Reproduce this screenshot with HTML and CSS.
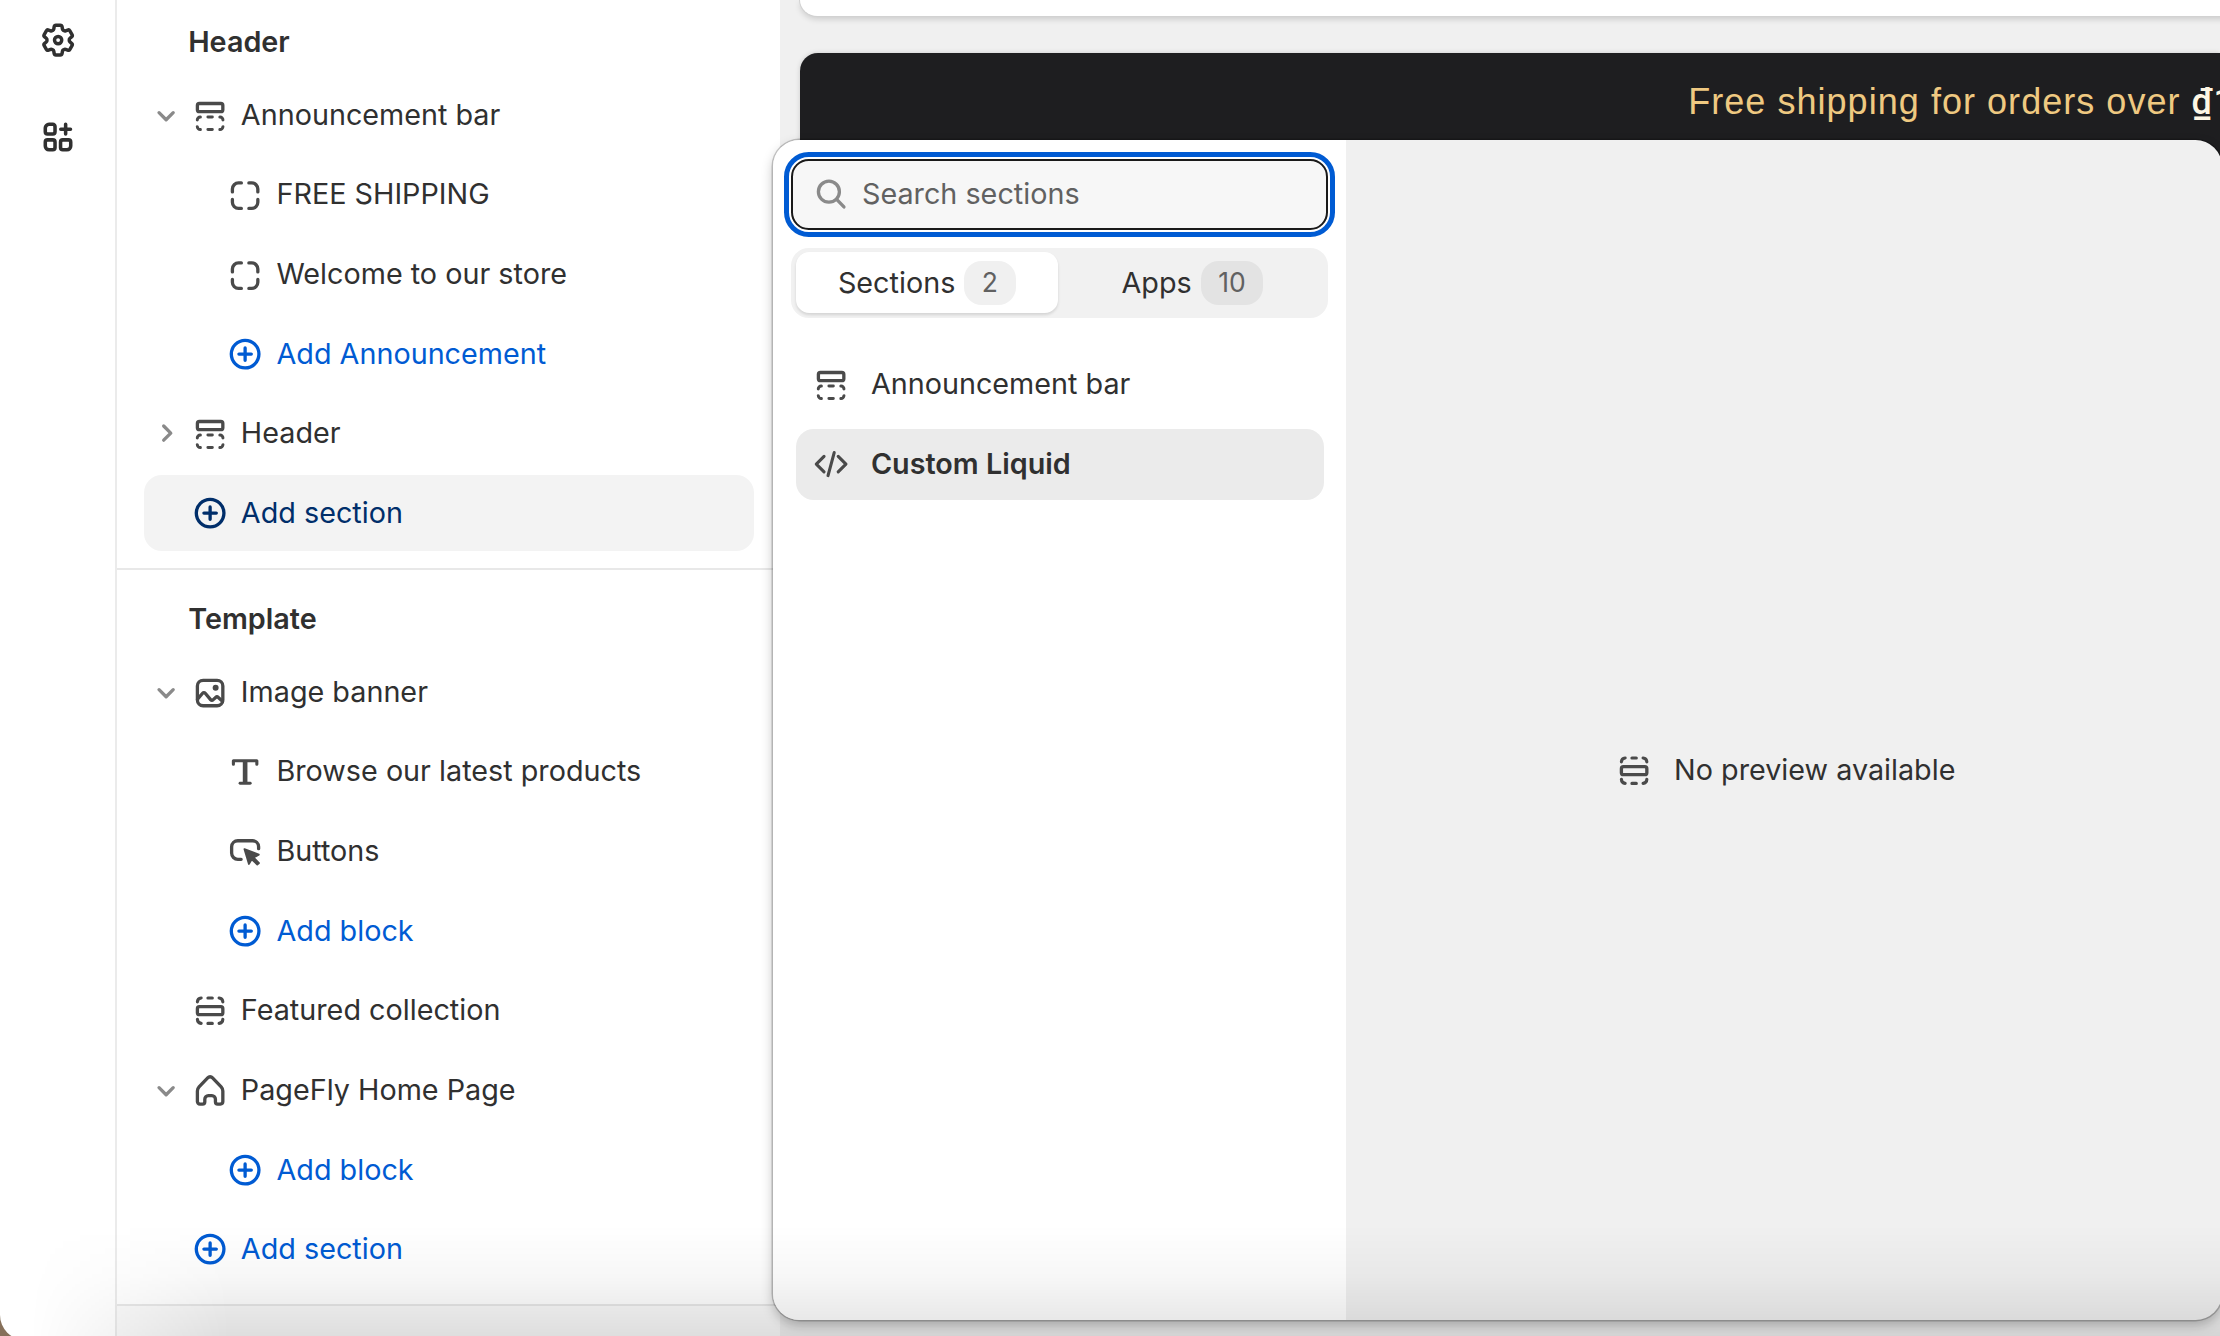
FILE: index.html
```html
<!DOCTYPE html>
<html lang="en">
<head>
<meta charset="utf-8">
<title>Theme editor</title>
<link rel="stylesheet" href="styles.css">
</head>
<body>
<svg class="sprite" aria-hidden="true">
  <symbol id="gear" viewBox="0 0 20 20"><g transform="translate(10 10) scale(.745) translate(-12 -12)" stroke-width="2.1"><path d="M9.594 3.94c.09-.542.56-.94 1.11-.94h2.593c.55 0 1.02.398 1.11.94l.213 1.281c.063.374.313.686.645.87.074.04.147.083.22.127.325.196.72.257 1.075.124l1.217-.456a1.125 1.125 0 0 1 1.37.49l1.296 2.247a1.125 1.125 0 0 1-.26 1.431l-1.003.827c-.293.241-.438.613-.43.992a7.723 7.723 0 0 1 0 .255c-.008.378.137.75.43.991l1.004.827c.424.35.534.955.26 1.43l-1.298 2.247a1.125 1.125 0 0 1-1.369.491l-1.217-.456c-.355-.133-.75-.072-1.076.124a6.47 6.47 0 0 1-.22.128c-.331.183-.581.495-.644.869l-.213 1.281c-.09.543-.56.94-1.11.94h-2.594c-.55 0-1.019-.398-1.11-.94l-.213-1.281c-.062-.374-.312-.686-.644-.87a6.52 6.52 0 0 1-.22-.127c-.325-.196-.72-.257-1.076-.124l-1.217.456a1.125 1.125 0 0 1-1.369-.49l-1.297-2.247a1.125 1.125 0 0 1 .26-1.431l1.004-.827c.292-.24.437-.613.43-.991a6.932 6.932 0 0 1 0-.255c.007-.38-.138-.751-.43-.992l-1.004-.827a1.125 1.125 0 0 1-.26-1.43l1.297-2.247a1.125 1.125 0 0 1 1.37-.491l1.216.456c.356.133.751.072 1.076-.124.072-.044.146-.086.22-.128.332-.183.582-.495.644-.869l.214-1.28Z"/><circle cx="12" cy="12" r="2.2"/></g></symbol>
  <symbol id="apps" viewBox="0 0 20 20"><g stroke-width="1.6"><path d="M5.9 4.2H7.6a1 1 0 0 1 1 1V7.6a1 1 0 0 1-1 1H5.2a1 1 0 0 1-1-1V5.9A1.7 1.7 0 0 1 5.9 4.2Z"/><path d="M5.2 11.25H7.6a1 1 0 0 1 1 1v2.5a1 1 0 0 1-1 1H5.9a1.7 1.7 0 0 1-1.7-1.7v-1.8a1 1 0 0 1 1-1Z"/><path d="M12.1 11.25h2.6a1 1 0 0 1 1 1v1.8a1.7 1.7 0 0 1-1.7 1.7h-1.9a1 1 0 0 1-1-1v-2.5a1 1 0 0 1 1-1Z"/><path d="M13.4 4.2v4.4M11.2 6.4h4.4"/></g></symbol>
  <symbol id="section-top" viewBox="0 0 20 20"><rect x="4.25" y="4.75" width="11.5" height="3.7" rx=".9"/><g stroke-width="1.35"><path d="M4.2 12.2a1.3 1.3 0 0 1 1.4-1.3M14.4 10.9a1.3 1.3 0 0 1 1.4 1.3M15.8 15.2a1.3 1.3 0 0 1-1.4 1.3M5.6 16.5a1.3 1.3 0 0 1-1.4-1.3M9 10.9h2M9 16.5h2"/></g></symbol>
  <symbol id="section" viewBox="0 0 20 20"><rect x="4.25" y="8.45" width="11.5" height="3.6" rx=".9"/><path d="M4.25 6.3a1.9 1.9 0 0 1 1.7-1.8M14.05 4.5a1.9 1.9 0 0 1 1.7 1.8M15.75 14.2a1.9 1.9 0 0 1-1.7 1.8M5.95 16a1.9 1.9 0 0 1-1.7-1.8M9 4.5h2M9 16h2" stroke-width="1.4"/></symbol>
  <symbol id="block" viewBox="0 0 20 20"><path d="M4.25 9V7.7a2.75 2.75 0 0 1 2.75-2.75H8.3M11.7 4.95H13a2.75 2.75 0 0 1 2.75 2.75V9M15.75 12.4v1.3A2.75 2.75 0 0 1 13 16.45H11.7M8.3 16.45H7a2.75 2.75 0 0 1-2.75-2.75V12.4" stroke-width="1.5"/></symbol>
  <symbol id="plus" viewBox="0 0 20 20"><circle cx="10" cy="10" r="6.25"/><path d="M10 7.2v5.6M7.2 10h5.6"/></symbol>
  <symbol id="image" viewBox="0 0 20 20"><rect x="4.25" y="4.65" width="11.5" height="11.5" rx="2.6"/><circle cx="12.5" cy="8" r="1.35" fill="currentColor" stroke="none"/><path d="M4.3 13.2l2.3-2.7a.8.8 0 0 1 1.2 0l2.5 3a.7.7 0 0 0 1 0l1.2-1.1a.9.9 0 0 1 1.2 0l1.9 1.7"/></symbol>
  <symbol id="text" viewBox="0 0 20 20"><path d="M4.7 6.9V5.3H15.3V6.9" stroke-width="1.4"/><path d="M10 5.3V15.3" stroke-width="2.1" stroke-linecap="butt"/><path d="M7.7 15.5h4.6" stroke-width="1.3"/></symbol>
  <symbol id="button" viewBox="0 0 20 20"><path d="M16.1 8.9V8a2.8 2.8 0 0 0-2.8-2.7H6.7A2.8 2.8 0 0 0 3.9 8v2.9a2.8 2.8 0 0 0 2.8 2.8H8.2"/><path d="M9.7 9.1l6.5 2.5-2.3 1.3 2.4 2.5-.8.7-2.5-2.4-1.3 2.1Z" fill="currentColor" stroke-width=".8"/></symbol>
  <symbol id="home" viewBox="0 0 20 20"><path d="M8.9 4.45 5 8.5a2.7 2.7 0 0 0-.75 1.9v4.8a1.1 1.1 0 0 0 1.1 1.1H6.6a1 1 0 0 0 1-1v-1.2a1.6 1.6 0 0 1 1.6-1.6h1.6a1.6 1.6 0 0 1 1.6 1.6v1.2a1 1 0 0 0 1 1h1.25a1.1 1.1 0 0 0 1.1-1.1v-4.8A2.7 2.7 0 0 0 15 8.5L11.1 4.45a1.5 1.5 0 0 0-2.2 0Z"/></symbol>
  <symbol id="search" viewBox="0 0 20 20"><circle cx="9" cy="8.9" r="4.75"/><path d="M12.5 12.4l3.3 3.4"/></symbol>
  <symbol id="code" viewBox="0 0 20 20"><path d="M6.8 6.5 3.3 10l3.5 3.5M13.2 6.5l3.5 3.5-3.5 3.5M11.4 4.8 8.6 15.2" stroke-width="1.4"/></symbol>
  <symbol id="chevron" viewBox="0 0 20 20"><path d="M6.8 8.9 10 12.1l3.2-3.2"/></symbol>
</svg>

<div class="window">
  <nav class="rail">
    <svg class="icon"><use href="#gear"/></svg>
    <svg class="icon"><use href="#apps"/></svg>
  </nav>

  <aside class="sidebar">
    <section class="group">
      <h2 class="group-title">Header</h2>
      <ul class="tree">
        <li class="row"><svg class="icon chevron"><use href="#chevron"/></svg><svg class="icon"><use href="#section-top"/></svg><span>Announcement bar</span></li>
        <li class="row nested"><svg class="icon"><use href="#block"/></svg><span>FREE SHIPPING</span></li>
        <li class="row nested"><svg class="icon"><use href="#block"/></svg><span>Welcome to our store</span></li>
        <li class="row nested add"><svg class="icon"><use href="#plus"/></svg><span>Add Announcement</span></li>
        <li class="row"><svg class="icon chevron closed"><use href="#chevron"/></svg><svg class="icon"><use href="#section-top"/></svg><span>Header</span></li>
        <li class="row add active"><svg class="icon"><use href="#plus"/></svg><span>Add section</span></li>
      </ul>
    </section>
    <section class="group">
      <h2 class="group-title">Template</h2>
      <ul class="tree">
        <li class="row"><svg class="icon chevron"><use href="#chevron"/></svg><svg class="icon"><use href="#image"/></svg><span>Image banner</span></li>
        <li class="row nested"><svg class="icon"><use href="#text"/></svg><span>Browse our latest products</span></li>
        <li class="row nested"><svg class="icon"><use href="#button"/></svg><span>Buttons</span></li>
        <li class="row nested add"><svg class="icon"><use href="#plus"/></svg><span>Add block</span></li>
        <li class="row"><svg class="icon"><use href="#section"/></svg><span>Featured collection</span></li>
        <li class="row"><svg class="icon chevron"><use href="#chevron"/></svg><svg class="icon"><use href="#home"/></svg><span>PageFly Home Page</span></li>
        <li class="row nested add"><svg class="icon"><use href="#plus"/></svg><span>Add block</span></li>
        <li class="row add"><svg class="icon"><use href="#plus"/></svg><span>Add section</span></li>
      </ul>
    </section>
  </aside>

  <main class="canvas">
    <div class="toolbar"></div>
    <div class="announcement"><span>Free shipping for orders over <b>₫1</b></span></div>
  </main>

  <div class="picker">
    <div class="picker-list">
      <div class="search"><svg class="icon"><use href="#search"/></svg><span>Search sections</span></div>
      <div class="tabs">
        <div class="tab selected"><span>Sections</span><span class="badge">2</span></div>
        <div class="tab"><span>Apps</span><span class="badge">10</span></div>
      </div>
      <ul class="options">
        <li class="option"><svg class="icon"><use href="#section-top"/></svg><span>Announcement bar</span></li>
        <li class="option current"><svg class="icon"><use href="#code"/></svg><span>Custom Liquid</span></li>
      </ul>
    </div>
    <div class="preview"><svg class="icon"><use href="#section"/></svg><span>No preview available</span></div>
  </div>

  <div class="bottom-shade"></div>
</div>
</body>
</html>
```
FILE: styles.css
```css
* { box-sizing: border-box; }

body {
  margin: 0;
  width: 2220px;
  height: 1336px;
  overflow: hidden;
  background: #86705a;
  color: #303030;
  font: 400 28.76px/44.24px Inter, "Liberation Sans", sans-serif;
}

ul { list-style: none; margin: 0; padding: 0; }

.sprite { position: absolute; width: 0; height: 0; }

.icon {
  flex: none;
  width: 44.24px;
  height: 44.24px;
  color: #4a4a4a;
  fill: none;
  stroke: currentColor;
  stroke-width: 1.5;
  stroke-linecap: round;
  stroke-linejoin: round;
}

.window {
  position: relative;
  display: flex;
  height: 1340px;
  overflow: hidden;
  border-bottom-left-radius: 25px;
  background: #fff;
}

.rail {
  width: 117.2px;
  flex: none;
  display: flex;
  flex-direction: column;
  align-items: center;
  gap: 53.2px;
  padding: 17.8px 0 0 1px;
  border-right: 2px solid #ebebeb;
}
.rail .icon { color: #303030; }

.sidebar { width: 663px; flex: none; background: #fafafa; }

.group {
  padding-bottom: 17.3px;
  border-bottom: 2px solid #e8e8e8;
  background: #fff;
}
.group-title {
  margin: 0;
  padding: 13px 0 0 71px;
  height: 84.4px;
  font-size: 28.76px;
  font-weight: 630;
  line-height: 71px;
}
.group:first-child .group-title { height: 77.3px; padding-top: 5.8px; }

.tree {
  display: flex;
  flex-direction: column;
  gap: 4.42px;
  padding: 0 26.3px 0 27.2px;
}
.row {
  position: relative;
  display: flex;
  align-items: center;
  gap: 8.85px;
  height: 75.22px;
  padding-left: 43.4px;
  border-radius: 17.7px;
}
.row.nested { padding-left: 79px; }
.row.add, .row.add .icon { color: #005bd3; }
.row.active { background: #f3f3f3; }
.row.active, .row.active .icon { color: #002e6a; }
.icon.chevron {
  position: absolute;
  left: 0;
  color: #8a8a8a;
}
.icon.chevron.closed { transform: rotate(-90deg); }

.canvas {
  flex: 1;
  padding-left: 20px;
  background: #f0f0f0;
  overflow: hidden;
}
.toolbar {
  height: 16px;
  margin-right: -30px;
  background: #fff;
  border-bottom-left-radius: 24px 22px;
  box-shadow: 0 0 0 1px #d2d2d2, 0 3px 6px rgba(0, 0, 0, .16);
}
.announcement {
  height: 150px;
  margin-top: 37px;
  padding: 26px 0 0 888px;
  border-top-left-radius: 18px;
  background: #1e1e20;
  box-shadow: 0 0 5px rgba(0, 0, 0, .15);
  color: #efc981;
  font: 400 36px/46px "Liberation Sans", Arial, sans-serif;
  letter-spacing: 1.04px;
  white-space: nowrap;
}
.announcement b {
  color: #fdf6e4;
  font-family: Roboto, "Liberation Sans", sans-serif;
  font-weight: 500;
}

/* Section picker floats over the sidebar edge and the canvas */
.picker {
  position: absolute;
  left: 772.6px;
  top: 140px;
  width: 1449px;
  height: 1180px;
  display: flex;
  overflow: hidden;
  border-radius: 26.5px;
  background: #f0f0f0;
  box-shadow: 0 0 0 1.5px rgba(0, 0, 0, .2), 0 5px 12px rgba(0, 0, 0, .25);
}
.picker-list {
  width: 573.4px;
  flex: none;
  padding: 19px 18px 0 18.7px;
  background: #fff;
}
.search {
  display: flex;
  align-items: center;
  gap: 8.85px;
  height: 71px;
  padding-left: 15.6px;
  border: 2.2px solid #1a1a1a;
  border-radius: 17.7px;
  outline: 5px solid #005bd3;
  outline-offset: 2px;
  background: #f7f7f7;
  color: #616161;
}
.search .icon { color: #8a8a8a; }

.tabs {
  display: flex;
  gap: 3.4px;
  height: 70px;
  margin-top: 17.7px;
  padding: 4.4px;
  border-radius: 17.7px;
  background: #f1f1f1;
}
.tab {
  flex: 1;
  display: flex;
  align-items: center;
  justify-content: center;
  gap: 8.85px;
  border-radius: 13.3px;
}
.tab.selected { background: #fff; box-shadow: 0 2px 3px rgba(0, 0, 0, .12); }
.badge {
  height: 44.24px;
  padding: 0 17.7px;
  border-radius: 17.7px;
  background: #e3e3e3;
  color: #616161;
  font-size: 26.5px;
  line-height: 43px;
}
.selected .badge { background: #f0f0f0; }

.options {
  display: flex;
  flex-direction: column;
  gap: 8.85px;
  margin-top: 31.4px;
  padding: 0 4.4px;
}
.option {
  display: flex;
  align-items: center;
  gap: 17.7px;
  height: 70.8px;
  padding-left: 13.3px;
  border-radius: 17.7px;
}
.option.current { background: #ebebeb; font-weight: 630; }

.preview {
  flex: 1;
  display: flex;
  align-items: center;
  justify-content: center;
  gap: 17.7px;
  padding-top: 81px;
}

.bottom-shade {
  position: absolute;
  inset: 1225px 0 0 0;
  background: linear-gradient(to bottom, transparent, rgba(0, 0, 0, .03) 45%, rgba(0, 0, 0, .115));
  mask-image: linear-gradient(to right, transparent 30px, #000 230px);
}
```
